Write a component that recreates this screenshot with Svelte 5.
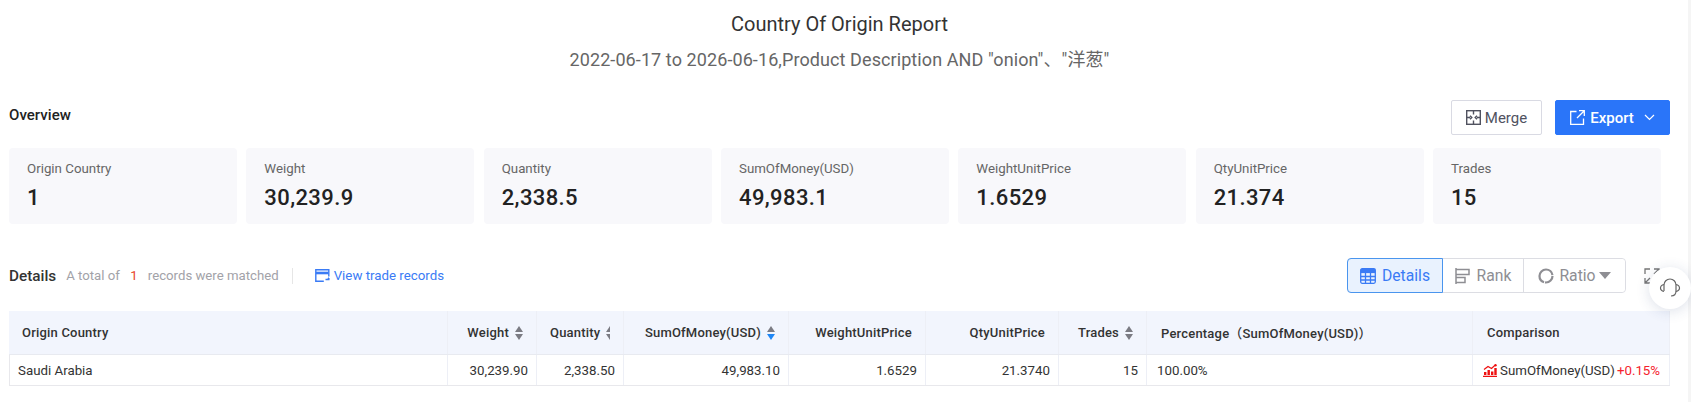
<script>
  const cards = [
    { label: 'Origin Country', value: '1' },
    { label: 'Weight', value: '30,239.9' },
    { label: 'Quantity', value: '2,338.5' },
    { label: 'SumOfMoney(USD)', value: '49,983.1' },
    { label: 'WeightUnitPrice', value: '1.6529' },
    { label: 'QtyUnitPrice', value: '21.374' },
    { label: 'Trades', value: '15' }
  ];

  const columns = [
    { key: 'country', title: 'Origin Country', width: 439, align: 'left', cls: 'first' },
    { key: 'weight', title: 'Weight', width: 89, align: 'right', sort: 'none' },
    { key: 'quantity', title: 'Quantity', width: 87, align: 'right', sort: 'clip' },
    { key: 'money', title: 'SumOfMoney(USD)', width: 165, align: 'right', sort: 'desc' },
    { key: 'weightPrice', title: 'WeightUnitPrice', width: 137, align: 'right' },
    { key: 'qtyPrice', title: 'QtyUnitPrice', width: 133, align: 'right' },
    { key: 'trades', title: 'Trades', width: 88, align: 'right', sort: 'none' },
    { key: 'percent', title: 'Percentage（SumOfMoney(USD)）', width: 326, align: 'left', cls: 'pct' },
    { key: 'compare', title: 'Comparison', width: 197, align: 'left', cls: 'cmp' }
  ];

  const row = {
    country: 'Saudi Arabia',
    weight: '30,239.90',
    quantity: '2,338.50',
    money: '49,983.10',
    weightPrice: '1.6529',
    qtyPrice: '21.3740',
    trades: '15',
    percent: '100.00%'
  };
</script>

<div class="page">
  <header class="head">
    <h1>Country Of Origin Report</h1>
    <p>2022-06-17 to 2026-06-16,Product Description AND "onion"、"洋葱"</p>
  </header>

  <section class="overview">
    <h2>Overview</h2>
    <div class="actions">
      <button class="btn">
        <svg width="15" height="15" viewBox="0 0 15 15" fill="none" stroke="currentColor" stroke-width="1.4">
          <rect x="0.7" y="0.7" width="13.6" height="13.6" />
          <path d="M7.500 1v3.500M7.500 10.500V14M1 7.500h3M11 7.500h3M4 5.800l1.800 1.700L4 9.200M11 5.800 9.200 7.500 11 9.200" />
        </svg>
        Merge
      </button>
      <button class="btn primary">
        <svg width="15" height="15" viewBox="0 0 15 15" fill="none" stroke="currentColor" stroke-width="1.3">
          <path d="M6.500 1.500H.7v12.800h12.800V8.500M9 .7h5.300V6M14.300 .7 7 8" />
        </svg>
        Export
        <svg class="chev" width="11" height="7" viewBox="0 0 11 7" fill="none" stroke="currentColor" stroke-width="1.2">
          <path d="M1 1l4.500 4.500L10 1" />
        </svg>
      </button>
    </div>
  </section>

  <div class="cards">
    {#each cards as card}
      <div class="card">
        <div class="label">{card.label}</div>
        <div class="value">{card.value}</div>
      </div>
    {/each}
  </div>

  <section class="bar">
    <div class="bar-left">
      <h2>Details</h2>
      <span class="total">A total of <em>1</em> records were matched</span>
      <a class="link" href="#top">
        <svg width="15" height="13" viewBox="0 0 15 13" fill="none" stroke="currentColor" stroke-width="1.400">
          <path d="M13.800 7.500V.8H.8v11.400h8" />
          <path d="M1 4h12.500" stroke-width="2.600" />
          <path d="M10.500 10.500h4M13 8.800l1.600 1.700" />
        </svg>
        View trade records
      </a>
    </div>
    <div class="bar-right">
      <div class="tabs">
        <button class="tab active">
          <svg width="16" height="16" viewBox="0 0 16 16" fill="none" stroke="currentColor" stroke-width="1.300">
            <rect x="0.700" y="0.700" width="14.600" height="14.600" rx="1.500" />
            <path d="M0.700 3h14.600" stroke-width="4.200" />
            <path d="M0.700 8.500h14.600M0.700 12h14.600M5.500 5v10M10.500 5v10" />
          </svg>
          Details
        </button>
        <button class="tab">
          <svg width="16" height="16" viewBox="0 0 16 16" fill="none" stroke="currentColor" stroke-width="1.500">
            <path d="M1 0v16M1 1.500h13v5H1M1 9.500h9v5H1" />
          </svg>
          Rank
        </button>
        <button class="tab">
          <svg width="16" height="16" viewBox="0 0 16 16" fill="none" stroke="currentColor" stroke-width="2.200">
            <circle cx="8" cy="8" r="6.500" stroke-dasharray="11 1 27 2" />
          </svg>
          Ratio
          <span class="caret"></span>
        </button>
      </div>
      <svg class="expand" width="16" height="16" viewBox="0 0 16 16" fill="none" stroke="#777" stroke-width="1.300">
        <path d="M1 6V1h5M10 1h5v5M15 10v5h-5M6 15H1v-5M1.500 14.500 6 10M14.500 1.500 10 6" />
      </svg>
    </div>
  </section>

  <div class="table">
    <div class="tr thead">
      {#each columns as col}
        <div class="th {col.cls || ''}" class:right={col.align === 'right'} style="width: {col.width}px">
          <span>{col.title}</span>
          {#if col.sort}
            <span class="sort {col.sort}"><i class="up"></i><i class="down"></i></span>
          {/if}
        </div>
      {/each}
    </div>
    <div class="tr tbody">
      {#each columns as col}
        <div class="td {col.cls || ''}" class:right={col.align === 'right'} style="width: {col.width}px">
          {#if col.key === 'compare'}
            <svg width="14" height="13" viewBox="0 0 14 13">
              <path fill="#ee1111" d="M0 11.800h14V13H0zM1 8h2.400v3H1zM4.500 6h2.400v5H4.500zM8 7.500h2.400V11H8zM11.300 4h2.400v7h-2.400z" />
              <path fill="none" stroke="#ee1111" stroke-width="1.200" d="M1 5.500 5 2.500l3.500 2L12 1.200" />
              <circle cx="12.500" cy="1.200" r="1.200" fill="#ee1111" />
            </svg>
            <span>SumOfMoney(USD)</span>
            <span class="up-val">+0.15%</span>
          {:else}
            {row[col.key]}
          {/if}
        </div>
      {/each}
    </div>
  </div>

  <div class="support">
    <svg width="22" height="24" viewBox="0 0 22 24" fill="none" stroke="#666" stroke-width="1.200">
      <path d="M5 15V9a6 6 0 0 1 12 0v6c0 3-2 5-5 5" />
      <path d="M5 8.500C2.800 9 1.500 10.500 1.500 12S2.800 15 5 15.500M17 8.500c2.200.5 3.500 2 3.500 3.500s-1.300 3-3.500 3.500" />
    </svg>
  </div>
</div>

<style>
  :global(body) { margin: 0; background: #fff; }
  .page {
    position: relative; height: 402px; overflow: hidden; box-sizing: border-box;
    padding: 0 21px 0 9px; font-family: Roboto, "Noto Sans CJK SC", sans-serif; color: #222;
  }
  .page::after {
    content: ''; position: absolute; top: 0; right: 0; bottom: 0; width: 3px; background: #f5f5f5;
  }
  .head { text-align: center; padding-top: 10px; }
  .head h1 { margin: 0; font-size: 20px; line-height: 28px; font-weight: 400; color: #333; }
  .head p { margin: 9px 0 0; font-size: 18px; line-height: 26px; color: #666; letter-spacing: 0.09px; }
  .overview { display: flex; justify-content: space-between; align-items: flex-start; margin-top: 27px; }
  .overview h2 { margin: 5px 0 0; font-size: 15px; line-height: 20px; font-weight: 500; letter-spacing: 0.05px; }
  .actions { display: flex; gap: 13px; }
  .btn {
    display: flex; align-items: center; justify-content: center; gap: 4px; height: 35px; width: 91px;
    border: 1px solid #d9dae3; border-radius: 2px; background: #fff; color: #50525f;
    font: 400 15px Roboto, sans-serif; padding: 0;
  }
  .primary { width: 115px; background: #2a75f9; border-color: #2a75f9; color: #fff; font-weight: 500; gap: 5px; }
  .primary .chev { margin-left: 5px; }
  .cards { display: grid; grid-template-columns: repeat(7, 228px); column-gap: 9.330px; margin-top: 13px; }
  .card { height: 76px; background: #f8f8fb; border-radius: 4px; padding: 11px 18px; box-sizing: border-box; }
  .label { font-size: 13.300px; line-height: 19px; color: #666; }
  .value { margin-top: 6px; font-size: 22px; line-height: 28px; font-weight: 500; color: #222; letter-spacing: 0.4px; }
  .bar { display: flex; justify-content: space-between; align-items: center; height: 35px; margin-top: 34px; }
  .bar-left, .bar-right { display: flex; align-items: center; }
  .bar-left h2 { margin: 0; font-size: 15.300px; font-weight: 500; color: #333; }
  .total { margin-left: 10px; padding-right: 13px; border-right: 1px solid #e6e6e6; font-size: 13.200px; line-height: 16px; color: #a2a2a8; }
  .total em { font-style: normal; color: #e8452a; margin: 0 7px 0 7px; }
  .link { display: flex; align-items: center; gap: 4px; margin-left: 22px; font-size: 13.300px; color: #3a7bf5; text-decoration: none; }
  .tabs { display: flex; height: 35px; border: 1px solid #dcdde3; border-radius: 4px; box-sizing: border-box; width: 279px; }
  .tab {
    display: flex; align-items: center; justify-content: center; gap: 6px; padding: 0;
    border: 0; border-right: 1px solid #dcdde3; background: #fff; color: #8e8e93;
    font: 400 15.700px Roboto, sans-serif; width: 81px; height: 100%;
  }
  .tab:last-child { border-right: 0; flex: 1; border-radius: 0 4px 4px 0; gap: 5px; }
  .tab.active { width: 96px; margin: -1px 0 -1px -1px; height: 35px; background: #e9f2fe; color: #3a7bf5; border: 1px solid #4a95ee; border-radius: 4px 0 0 4px; box-sizing: border-box; }
  .caret { width: 0; height: 0; margin-left: -2px; border: 6.500px solid transparent; border-top: 7px solid #8e8e93; border-bottom: 0; }
  .expand { margin: 0 10px 0 18px; }
  .table { margin-top: 18px; }
  .tr { display: flex; }
  .th, .td { flex: none; box-sizing: border-box; display: flex; align-items: center; border-right: 1px solid #edeff6; font-size: 13.300px; white-space: nowrap; }
  .thead { height: 44px; background: #f2f5fd; border-bottom: 1px solid #e8eaf0; box-sizing: border-box; }
  .th { font-weight: 500; font-size: 13px; color: #333; padding: 0 13px; letter-spacing: .2px; }
  .th.right, .td.right { justify-content: flex-end; }
  .th.pct { padding-left: 14px; }
  .th.cmp { padding-left: 14px; }
  .sort { display: inline-flex; flex-direction: column; gap: 2px; margin-left: 6px; }
  .sort i { display: block; width: 0; height: 0; border: 4.500px solid transparent; }
  .sort .up { border-top: 0; border-bottom: 6px solid #7b7b83; }
  .sort .down { border-bottom: 0; border-top: 6px solid #7b7b83; }
  .sort.desc .down { border-top-color: #1f86f5; }
  .sort.clip { width: 5px; overflow: hidden; }
  .tbody { height: 31px; border-bottom: 1px solid #e8e8ec; box-shadow: inset 1px 0 0 #e8e8ec; box-sizing: border-box; }
  .td { padding: 1px 8px 0; color: #333; }
  .td.first { padding-left: 9px; }
  .td.pct { padding-left: 10px; }
  .td.cmp { gap: 3px; padding-left: 10px; }
  .up-val { color: #f5222d; margin-left: -1px; }
  .support {
    position: absolute; left: 1649px; top: 267px; width: 42px; height: 42px; border-radius: 50%;
    background: #fff; box-shadow: 0 2px 14px rgba(40, 60, 120, 0.16); display: flex; align-items: center; justify-content: center; z-index: 2;
  }
</style>
